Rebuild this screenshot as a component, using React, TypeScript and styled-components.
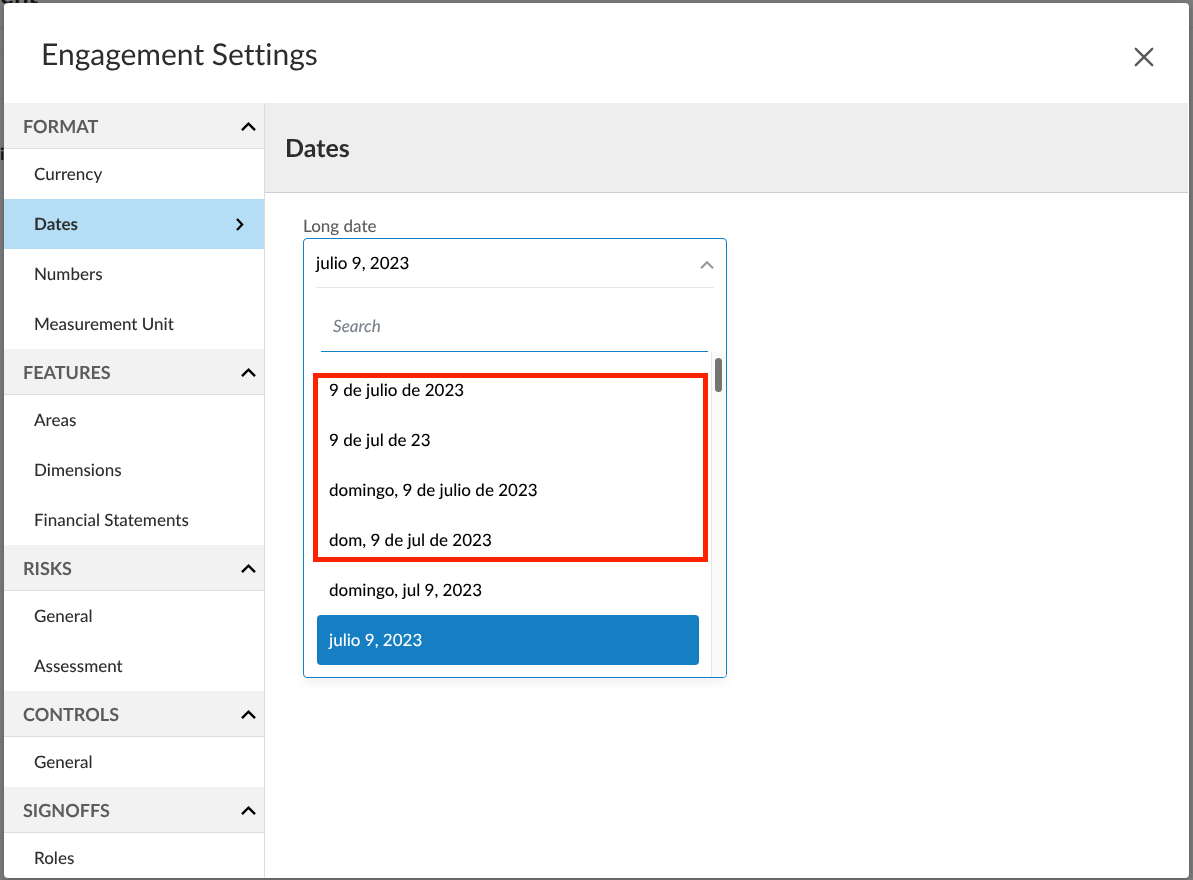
import React, { useState } from "react";
import styled, { createGlobalStyle, css } from "styled-components";

const GlobalStyle = createGlobalStyle`
  *, *::before, *::after { box-sizing: border-box; }
  body {
    margin: 0;
    background: #7e7e7e;
    color: #2d2d2d;
    font-family: Lato, "Liberation Sans", sans-serif;
    font-size: 17px;
    font-weight: 500;
    font-variant-ligatures: none;
    text-rendering: geometricPrecision;
    line-height: 24px;
  }
  button, input { font: inherit; color: inherit; text-rendering: inherit; }
`;

const Backdrop = styled.main`
  height: 100vh;
  overflow: hidden;
  color: #161616;
  font-weight: 700;
`;

const BackdropTitle = styled.div`
  height: 34px;
  margin-top: -6px;
  border-bottom: 1px solid #727272;
  font-size: 26px;
  line-height: 1px;
`;

const BackdropBar = styled.div`
  height: 26px;
  border-bottom: 1px solid #787878;
`;

const BackdropLabel = styled.div`
  padding-top: 88px;
`;

const Overlay = styled.div`
  position: fixed;
  inset: 0;
  display: flex;
  padding: 3px 4px 2px;
`;

const Dialog = styled.section`
  flex: 1;
  min-width: 0;
  display: flex;
  flex-direction: column;
  overflow: hidden;
  background: #fff;
  border-radius: 4px;
  box-shadow: 0 2px 8px rgba(0, 0, 0, 0.3);
`;

const DialogHeader = styled.header`
  flex: none;
  height: 100px;
  display: flex;
  align-items: center;
  justify-content: space-between;
  padding: 2px 32px 0 37px;
`;

const DialogTitle = styled.h1`
  margin: 0;
  font-size: 30px;
  line-height: 40px;
  font-weight: 400;
`;

const CloseButton = styled.button`
  display: flex;
  padding: 6px 0 0;
  border: 0;
  background: none;
  color: #5a5a5a;
  cursor: pointer;
`;

const DialogBody = styled.div`
  flex: 1;
  min-height: 0;
  display: flex;
`;

const Sidebar = styled.nav`
  flex: none;
  width: 261px;
  overflow-y: auto;
  scrollbar-width: none;
  border-right: 1px solid #dcdcdc;
`;

const SectionHeader = styled.button`
  width: 100%;
  height: 46px;
  display: flex;
  align-items: center;
  justify-content: space-between;
  padding: 0 8px 0 19px;
  border: 0;
  border-bottom: 1px solid #dedede;
  background: #f2f2f2;
  color: #5c5c5c;
  font-size: 18px;
  line-height: 22px;
  font-weight: 700;
  cursor: pointer;
`;

const NavList = styled.ul`
  margin: 0;
  padding: 0;
  list-style: none;
`;

const NavLink = styled.a<{ $active: boolean }>`
  height: 50px;
  display: flex;
  align-items: center;
  justify-content: space-between;
  padding: 0 19px 0 30px;
  color: #2d2d2d;
  text-decoration: none;
  ${(p) =>
    p.$active &&
    css`
      background: #b5def6;
      font-weight: 700;
    `}
`;

const Content = styled.div`
  flex: 1;
  min-width: 0;
  display: flex;
  flex-direction: column;
  padding-right: 1px;
`;

const ContentHeader = styled.div`
  height: 90px;
  display: flex;
  align-items: center;
  padding: 0 20px;
  background: #eee;
  border-bottom: 1px solid #cbd0d8;
`;

const ContentTitle = styled.h2`
  margin: 0;
  font-size: 25px;
  line-height: 32px;
  font-weight: 700;
`;

const Field = styled.div`
  width: 424px;
  max-width: 100%;
  margin: 21px 38px;
`;

const FieldLabel = styled.label`
  display: block;
  color: #5c5c5c;
`;

const Select = styled.div`
  position: relative;
  border: 1px solid #167ec2;
  border-radius: 4px;
  color: #000;
  box-shadow: 0 6px 10px rgba(0, 0, 0, 0.05);
`;

const SelectTrigger = styled.button`
  width: calc(100% - 24px);
  height: 49px;
  display: flex;
  align-items: center;
  justify-content: space-between;
  margin: 0 12px;
  padding: 0;
  border: 0;
  border-bottom: 1px solid #e6e6e6;
  background: none;
  cursor: pointer;
`;

const SearchInput = styled.input`
  display: block;
  width: calc(100% - 35px);
  height: 52px;
  margin: 12px 18px 0 17px;
  padding: 0 12px;
  border: 0;
  border-bottom: 1px solid #167ec2;
  outline: 0;
  background: none;
  &::placeholder {
    color: #7a838b;
    font-style: italic;
    opacity: 1;
  }
`;

const OptionsArea = styled.div`
  height: 325px;
  display: flex;
`;

const OptionList = styled.div`
  flex: 1;
  padding: 13px 12px 12px 13px;
`;

const Option = styled.button<{ $selected: boolean }>`
  display: block;
  width: 100%;
  height: 50px;
  padding: 0 12px;
  border: 0;
  border-radius: 4px;
  text-align: left;
  cursor: pointer;
  background: ${(p) => (p.$selected ? "#167ec2" : "none")};
  color: ${(p) => (p.$selected ? "#fff" : "#000")};
`;

const ScrollTrack = styled.div`
  width: 15px;
  padding: 6px 3px;
  border-left: 1px solid #e6e6e6;
  border-radius: 0 0 3px 0;
  background: #fafafa;
`;

const ScrollThumb = styled.div`
  width: 7px;
  height: 34px;
  border-radius: 4px;
  background: #757575;
`;

const Highlight = styled.div`
  position: absolute;
  top: 134px;
  left: 9px;
  right: 18px;
  height: 189px;
  border: 5px solid #ff2200;
  pointer-events: none;
`;

const ChevronUp = () => (
  <svg width="15" height="10" viewBox="0 0 15 10" fill="none" stroke="#000" strokeWidth="2.4" aria-hidden="true">
    <path d="M1 9.2 7.5 2.6 14 9.2" />
  </svg>
);

const ChevronRight = () => (
  <svg width="10" height="14" viewBox="0 0 10 14" fill="none" stroke="#000" strokeWidth="2.2" aria-hidden="true">
    <path d="M2 1.9 7.2 7.4 2 12.9" />
  </svg>
);

const CaretUp = () => (
  <svg width="14" height="12" viewBox="0 0 14 12" fill="none" stroke="#999" strokeWidth="2.2" aria-hidden="true">
    <path d="M1 11.2 7 5.2 13 11.2" />
  </svg>
);

const CloseIcon = () => (
  <svg width="26" height="26" viewBox="0 0 26 26" fill="none" stroke="currentColor" strokeWidth="2.4" strokeLinecap="round" aria-hidden="true">
    <path d="M4.8 4.8 21.2 21.2M21.2 4.8 4.8 21.2" />
  </svg>
);

const sections = [
  { title: "FORMAT", items: ["Currency", "Dates", "Numbers", "Measurement Unit"] },
  { title: "FEATURES", items: ["Areas", "Dimensions", "Financial Statements"] },
  { title: "RISKS", items: ["General", "Assessment"] },
  { title: "CONTROLS", items: ["General"] },
  { title: "SIGNOFFS", items: ["Roles"] },
];

const dateFormats = [
  "9 de julio de 2023",
  "9 de jul de 23",
  "domingo, 9 de julio de 2023",
  "dom, 9 de jul de 2023",
  "domingo, jul 9, 2023",
  "julio 9, 2023",
];

export default function App() {
  const [selected, setSelected] = useState("julio 9, 2023");

  return (
    <>
      <GlobalStyle />
      <Backdrop aria-hidden="true">
        <BackdropTitle>ent</BackdropTitle>
        <BackdropBar />
        <BackdropLabel>i</BackdropLabel>
      </Backdrop>
      <Overlay>
        <Dialog role="dialog" aria-labelledby="dialog-title">
          <DialogHeader>
            <DialogTitle id="dialog-title">Engagement Settings</DialogTitle>
            <CloseButton type="button" aria-label="Close">
              <CloseIcon />
            </CloseButton>
          </DialogHeader>
          <DialogBody>
            <Sidebar aria-label="Settings">
              {sections.map((section) => (
                <div key={section.title}>
                  <SectionHeader type="button" aria-expanded="true">
                    {section.title}
                    <ChevronUp />
                  </SectionHeader>
                  <NavList>
                    {section.items.map((item) => (
                      <li key={item}>
                        <NavLink href="#" $active={item === "Dates"}>
                          {item}
                          {item === "Dates" && <ChevronRight />}
                        </NavLink>
                      </li>
                    ))}
                  </NavList>
                </div>
              ))}
            </Sidebar>
            <Content>
              <ContentHeader>
                <ContentTitle>Dates</ContentTitle>
              </ContentHeader>
              <Field>
                <FieldLabel htmlFor="long-date">Long date</FieldLabel>
                <Select>
                  <SelectTrigger id="long-date" type="button" aria-haspopup="listbox" aria-expanded="true">
                    {selected}
                    <CaretUp />
                  </SelectTrigger>
                  <SearchInput type="text" placeholder="Search" aria-label="Search" />
                  <OptionsArea>
                    <OptionList role="listbox" aria-label="Long date">
                      {dateFormats.map((format) => (
                        <Option
                          key={format}
                          type="button"
                          role="option"
                          aria-selected={format === selected}
                          $selected={format === selected}
                          onClick={() => setSelected(format)}
                        >
                          {format}
                        </Option>
                      ))}
                    </OptionList>
                    <ScrollTrack>
                      <ScrollThumb />
                    </ScrollTrack>
                  </OptionsArea>
                  <Highlight />
                </Select>
              </Field>
            </Content>
          </DialogBody>
        </Dialog>
      </Overlay>
    </>
  );
}
